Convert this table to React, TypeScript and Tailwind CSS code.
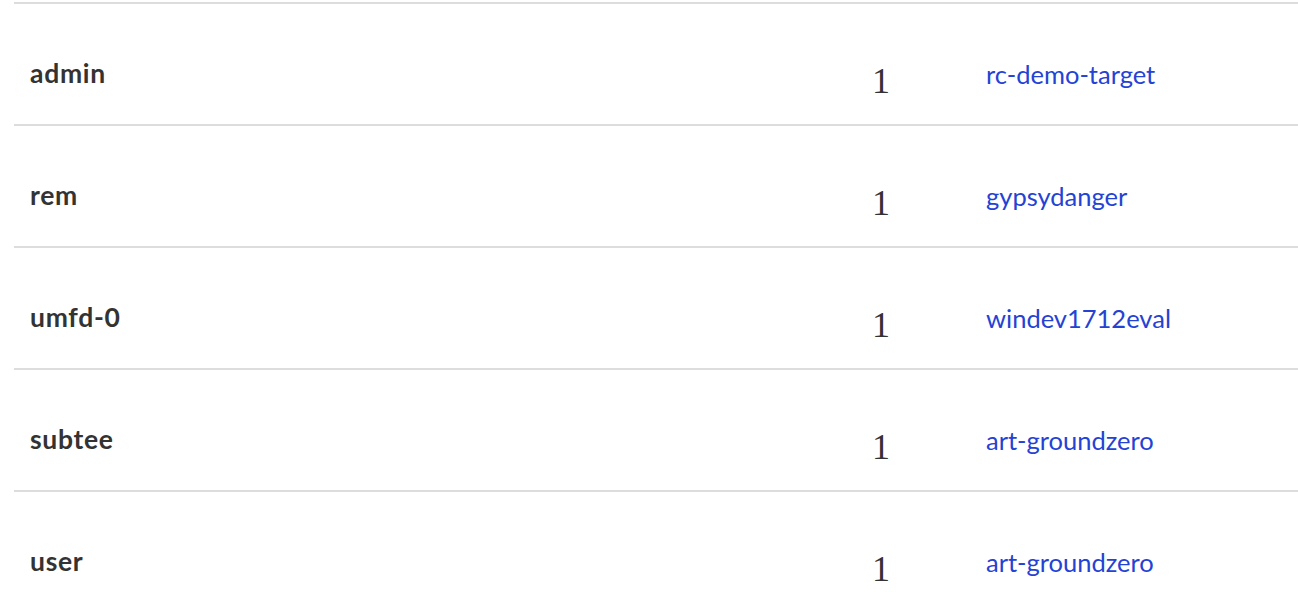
import React from "react";

const rows = [
  { name: "admin", count: "1", host: "rc-demo-target" },
  { name: "rem", count: "1", host: "gypsydanger" },
  { name: "umfd-0", count: "1", host: "windev1712eval" },
  { name: "subtee", count: "1", host: "art-groundzero" },
  { name: "user", count: "1", host: "art-groundzero" },
];

export default function App() {
  return (
    <div className="w-[1298px] h-[606px] bg-white overflow-hidden pt-[2px]">
      <div className="ml-[14px] border-t-2 border-[#dddddd]">
        {rows.map((r, i) => (
          <div key={i} className="flex h-[122px] border-b-2 border-[#dddddd] items-center pt-[20px]">
            <div className="w-[858px] pl-[16px] text-[26.5px] tracking-[0.7px] font-bold text-[#333333] [font-family:Lato,sans-serif]">
              {r.name}
            </div>
            <div className="w-[114px] pt-[14px] text-[36px] font-light text-[#333333] [font-family:'Liberation_Serif',serif] leading-none">
              {r.count}
            </div>
            <div className="text-[25.5px] text-[#2443d4] [font-family:Lato,sans-serif]">
              <a href="#">{r.host}</a>
            </div>
          </div>
        ))}
      </div>
    </div>
  );
}
